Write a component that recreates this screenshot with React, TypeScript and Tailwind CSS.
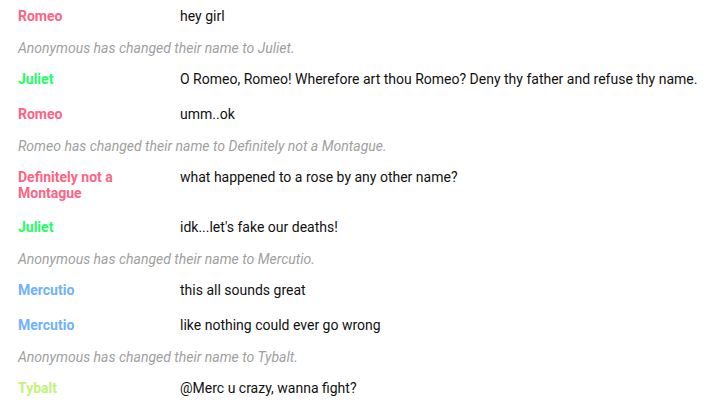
type Item =
  | { kind: 'msg'; name: string; color: string; text: string }
  | { kind: 'sys'; text: string };

const ROMEO = 'text-[#ff6384]';
const JULIET = 'text-[#1cff66]';
const MERCUTIO = 'text-[#6fb2ff]';
const TYBALT = 'text-[#c4f27a]';

const items: Item[] = [
  { kind: 'msg', name: 'Romeo', color: ROMEO, text: 'hey girl' },
  { kind: 'sys', text: 'Anonymous has changed their name to Juliet.' },
  {
    kind: 'msg',
    name: 'Juliet',
    color: JULIET,
    text: 'O Romeo, Romeo! Wherefore art thou Romeo? Deny thy father and refuse thy name.',
  },
  { kind: 'msg', name: 'Romeo', color: ROMEO, text: 'umm..ok' },
  { kind: 'sys', text: 'Romeo has changed their name to Definitely not a Montague.' },
  { kind: 'msg', name: 'Definitely not a Montague', color: ROMEO, text: 'what happened to a rose by any other name?' },
  { kind: 'msg', name: 'Juliet', color: JULIET, text: "idk...let's fake our deaths!" },
  { kind: 'sys', text: 'Anonymous has changed their name to Mercutio.' },
  { kind: 'msg', name: 'Mercutio', color: MERCUTIO, text: 'this all sounds great' },
  { kind: 'msg', name: 'Mercutio', color: MERCUTIO, text: 'like nothing could ever go wrong' },
  { kind: 'sys', text: 'Anonymous has changed their name to Tybalt.' },
  { kind: 'msg', name: 'Tybalt', color: TYBALT, text: '@Merc u crazy, wanna fight?' },
];

export default function App() {
  return (
    <div className="min-h-screen bg-white font-['Roboto',sans-serif] text-[14px] leading-[17px] text-[#111]">
      <div className="-mt-px pl-[18px] pr-4">
        {items.map((item, i) =>
          item.kind === 'sys' ? (
            <div key={i} className="py-[5.5px] italic text-[#a0a0a0]">
              {item.text}
            </div>
          ) : (
            <div key={i} className="flex py-[9px]">
              <div className={`w-[140px] shrink-0 font-bold leading-[16px] ${item.color}`}>{item.name}</div>
              <div className="ml-[22px]">{item.text}</div>
            </div>
          ),
        )}
      </div>
    </div>
  );
}
